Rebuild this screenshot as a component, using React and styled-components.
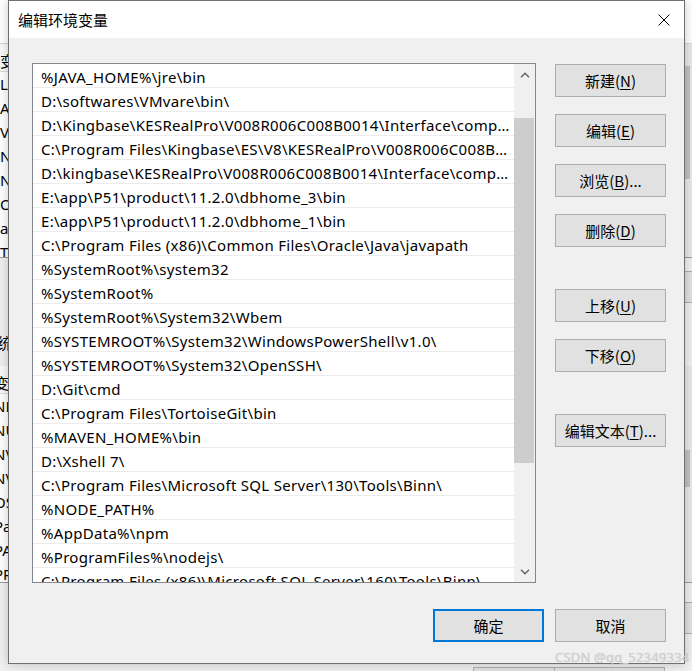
import React from "react";
import styled, { createGlobalStyle } from "styled-components";

const GlobalStyle = createGlobalStyle`
  html, body {
    margin: 0;
    padding: 0;
    background: #f0f0f0;
    overflow: hidden;
  }
  * { box-sizing: border-box; }
`;

const FONT = `"Noto Sans", "Noto Sans CJK SC", sans-serif`;
const CJK = `"Noto Sans CJK SC", "Noto Sans", sans-serif`;

const paths = [
  "%JAVA_HOME%\\jre\\bin",
  "D:\\softwares\\VMvare\\bin\\",
  "D:\\Kingbase\\KESRealPro\\V008R006C008B0014\\Interface\\compat\\lib",
  "C:\\Program Files\\Kingbase\\ES\\V8\\KESRealPro\\V008R006C008B0014\\Server\\bin",
  "D:\\kingbase\\KESRealPro\\V008R006C008B0014\\Interface\\compat\\bin",
  "E:\\app\\P51\\product\\11.2.0\\dbhome_3\\bin",
  "E:\\app\\P51\\product\\11.2.0\\dbhome_1\\bin",
  "C:\\Program Files (x86)\\Common Files\\Oracle\\Java\\javapath",
  "%SystemRoot%\\system32",
  "%SystemRoot%",
  "%SystemRoot%\\System32\\Wbem",
  "%SYSTEMROOT%\\System32\\WindowsPowerShell\\v1.0\\",
  "%SYSTEMROOT%\\System32\\OpenSSH\\",
  "D:\\Git\\cmd",
  "C:\\Program Files\\TortoiseGit\\bin",
  "%MAVEN_HOME%\\bin",
  "D:\\Xshell 7\\",
  "C:\\Program Files\\Microsoft SQL Server\\130\\Tools\\Binn\\",
  "%NODE_PATH%",
  "%AppData%\\npm",
  "%ProgramFiles%\\nodejs\\",
  "C:\\Program Files (x86)\\Microsoft SQL Server\\160\\Tools\\Binn\\",
];

const userVars = ["LIB", "APPDATA", "VMWARE_HOME", "NVM_HOME", "NVM_SYMLINK", "OneDrive", "asl.log", "TEMP"];
const sysVars = ["NLS_LANG", "NUMBER_OF_PROCESSORS", "NVM_HOME", "NVM_SYMLINK", "OS", "Path", "PATHEXT", "PROCESSOR_ARCHITECTURE"];

/* ---------- parent window behind the dialog ---------- */

const Screen = styled.div`
  position: relative;
  width: 692px;
  height: 671px;
  overflow: hidden;
  font-family: ${FONT};
`;

const Parent = styled.div`
  display: flex;
  flex-direction: column;
  width: 692px;
  height: 671px;
  background: #f0f0f0;

  & > * {
    flex-shrink: 0;
  }
`;

const ParentTitle = styled.div`
  height: 44px;
  background: #fff;
  border-bottom: 1px solid #d4d4d4;
`;

const VarTable = styled.div`
  display: flex;
  height: ${(p) => p.$height}px;
  background: #fff;
  border-bottom: 1px solid #9a9a9a;
  overflow: hidden;
`;

const VarRows = styled.div`
  flex: 1;
  overflow: hidden;
`;

const VarHeader = styled.div`
  height: 28px;
  line-height: 28px;
  padding-top: 3px;
  background: #fafafa;
  border-bottom: 1px solid #dcdcdc;
  font-family: ${CJK};
  font-size: 15px;
  text-indent: ${(p) => p.$indent}px;
  white-space: nowrap;
  overflow: hidden;
`;

const VarRow = styled.div`
  height: 24px;
  line-height: 24px;
  font-size: 15px;
  color: #000;
  text-indent: ${(p) => p.$indent}px;
  white-space: nowrap;
`;

const ParentScroll = styled.div`
  width: 17px;
  background: #e9e9e9;
  border-left: 1px solid #dcdcdc;
  padding: ${(p) => p.$thumbTop}px 2px 0 3px;
`;

const ParentThumb = styled.div`
  height: ${(p) => p.$size}px;
  background: #c2c2c2;
`;

const ParentBar = styled.div`
  display: flex;
  justify-content: flex-end;
  align-items: flex-start;
  height: ${(p) => p.$height}px;
  padding-top: ${(p) => p.$pad}px;
`;

const ParentButton = styled.div`
  width: 111px;
  height: 32px;
  margin-right: -40px;
  background: #e1e1e1;
  border: 1px solid #adadad;
`;

const SectionLabel = styled.div`
  height: 36px;
  line-height: 26px;
  font-family: ${CJK};
  font-size: 15px;
  text-indent: -18px;
  white-space: nowrap;
`;

const ParentFooter = styled.div`
  display: flex;
  gap: 10px;
  padding: 3px 0 0 473px;
`;

/* ---------- dialog ---------- */

const Dialog = styled.div`
  position: absolute;
  left: 8px;
  top: 0;
  width: 677px;
  height: 664px;
  display: flex;
  flex-direction: column;
  background: #f0f0f0;
  border: 1px solid #6f6f6f;
  box-shadow: 0 0 10px rgba(0, 0, 0, 0.22);
`;

const TitleBar = styled.div`
  height: 37px;
  display: flex;
  align-items: center;
  justify-content: space-between;
  background: #fff;
  padding: 0 14px 0 9px;
`;

const Title = styled.div`
  font-family: ${CJK};
  font-size: 15px;
  color: #000;
`;

const CloseButton = styled.div`
  display: flex;
  width: 12px;
  height: 12px;
`;

const Body = styled.div`
  flex: 1;
  display: flex;
  flex-direction: column;
  padding: 25px 18px 21px 23px;
`;

const Main = styled.div`
  display: grid;
  grid-template-columns: 504px 111px;
  column-gap: 19px;
`;

const ListBox = styled.div`
  height: 520px;
  display: flex;
  background: #fff;
  border: 1px solid #828790;
  overflow: hidden;
`;

const Rows = styled.div`
  flex: 1;
  min-width: 0;
`;

const Row = styled.div`
  height: 24px;
  line-height: 22px;
  padding: 2px 4px 0 8px;
  border-bottom: 1px solid #ececec;
  font-family: ${FONT};
  font-size: 15px;
  letter-spacing: 0.3px;
  color: #000;
  white-space: nowrap;
  overflow: hidden;
  text-overflow: ellipsis;
`;

const ScrollBar = styled.div`
  width: 21px;
  display: flex;
  flex-direction: column;
  background: #f0f0f0;
`;

const ArrowButton = styled.div`
  height: 21px;
  display: flex;
  align-items: center;
  justify-content: center;
`;

const Track = styled.div`
  flex: 1;
  padding-top: ${(p) => p.$offset}px;
`;

const Thumb = styled.div`
  height: ${(p) => p.$size}px;
  margin-right: 1px;
  background: #cdcdcd;
`;

const ButtonStack = styled.div`
  display: flex;
  flex-direction: column;
  gap: 17px;
  padding-top: 1px;
`;

const Button = styled.div`
  width: 111px;
  height: 33px;
  flex-shrink: 0;
  display: flex;
  align-items: center;
  justify-content: center;
  margin-top: ${(p) => (p.$spaced ? 25 : 0)}px;
  background: #e1e1e1;
  border: ${(p) => (p.$default ? "2px solid #0078d7" : "1px solid #adadad")};
  font-family: ${CJK};
  font-size: 15px;
  color: #000;
  padding-bottom: 1px;

  u {
    text-decoration-thickness: 1px;
    text-underline-offset: 2px;
  }
`;

const Footer = styled.div`
  display: flex;
  justify-content: flex-end;
  gap: 11px;
  margin-top: 26px;
`;

const Watermark = styled.div`
  position: absolute;
  left: 555px;
  top: 648px;
  font-family: "Noto Sans", sans-serif;
  font-size: 13px;
  letter-spacing: 0.2px;
  color: #d2d2d2;
  text-shadow: 0 0 1px rgba(120, 120, 120, 0.35);
  white-space: nowrap;
`;

const Chevron = ({ up }) => (
  <svg width="10" height="6" viewBox="0 0 10 6">
    <polyline
      points={up ? "1,5.2 5,1.2 9,5.2" : "1,0.8 5,4.8 9,0.8"}
      fill="none"
      stroke="#606060"
      strokeWidth="1.4"
    />
  </svg>
);

const VarList = ({ header, items, height, indent, thumbTop, thumbSize }) => (
  <VarTable $height={height}>
    <VarRows>
      <VarHeader $indent={indent}>{header}</VarHeader>
      {items.map((v) => (
        <VarRow key={v} $indent={indent}>{v}</VarRow>
      ))}
    </VarRows>
    <ParentScroll $thumbTop={thumbTop}>
      <ParentThumb $size={thumbSize} />
    </ParentScroll>
  </VarTable>
);

export default function App() {
  return (
    <>
      <GlobalStyle />
      <Screen>
        <Parent>
          <ParentTitle />
          <VarList header="变量" items={userVars} height={214} indent={0} thumbTop={22} thumbSize={113} />
          <ParentBar $height={72} $pad={13}>
            <ParentButton />
          </ParentBar>
          <SectionLabel>系统变量(S)</SectionLabel>
          <VarList header="变量" items={sysVars} height={217} indent={-6} thumbTop={84} thumbSize={37} />
          <ParentBar $height={81} $pad={19}>
            <ParentButton />
          </ParentBar>
          <ParentFooter>
            <ParentButton />
            <ParentButton />
          </ParentFooter>
        </Parent>

        <Dialog>
          <TitleBar>
            <Title>编辑环境变量</Title>
            <CloseButton>
              <svg width="12" height="12" viewBox="0 0 12 12">
                <path d="M0.5 0.5 L11.5 11.5 M11.5 0.5 L0.5 11.5" stroke="#000" strokeWidth="1" />
              </svg>
            </CloseButton>
          </TitleBar>
          <Body>
            <Main>
              <ListBox>
                <Rows>
                  {paths.map((p, i) => (
                    <Row key={i}>{p}</Row>
                  ))}
                </Rows>
                <ScrollBar>
                  <ArrowButton>
                    <Chevron up />
                  </ArrowButton>
                  <Track $offset={33}>
                    <Thumb $size={345} />
                  </Track>
                  <ArrowButton>
                    <Chevron />
                  </ArrowButton>
                </ScrollBar>
              </ListBox>
              <ButtonStack>
                <Button>新建(<u>N</u>)</Button>
                <Button>编辑(<u>E</u>)</Button>
                <Button>浏览(<u>B</u>)...</Button>
                <Button>删除(<u>D</u>)</Button>
                <Button $spaced>上移(<u>U</u>)</Button>
                <Button>下移(<u>O</u>)</Button>
                <Button $spaced>编辑文本(<u>T</u>)...</Button>
              </ButtonStack>
            </Main>
            <Footer>
              <Button $default>确定</Button>
              <Button>取消</Button>
            </Footer>
          </Body>
        </Dialog>
        <Watermark>CSDN @qq_52349334</Watermark>
      </Screen>
    </>
  );
}
